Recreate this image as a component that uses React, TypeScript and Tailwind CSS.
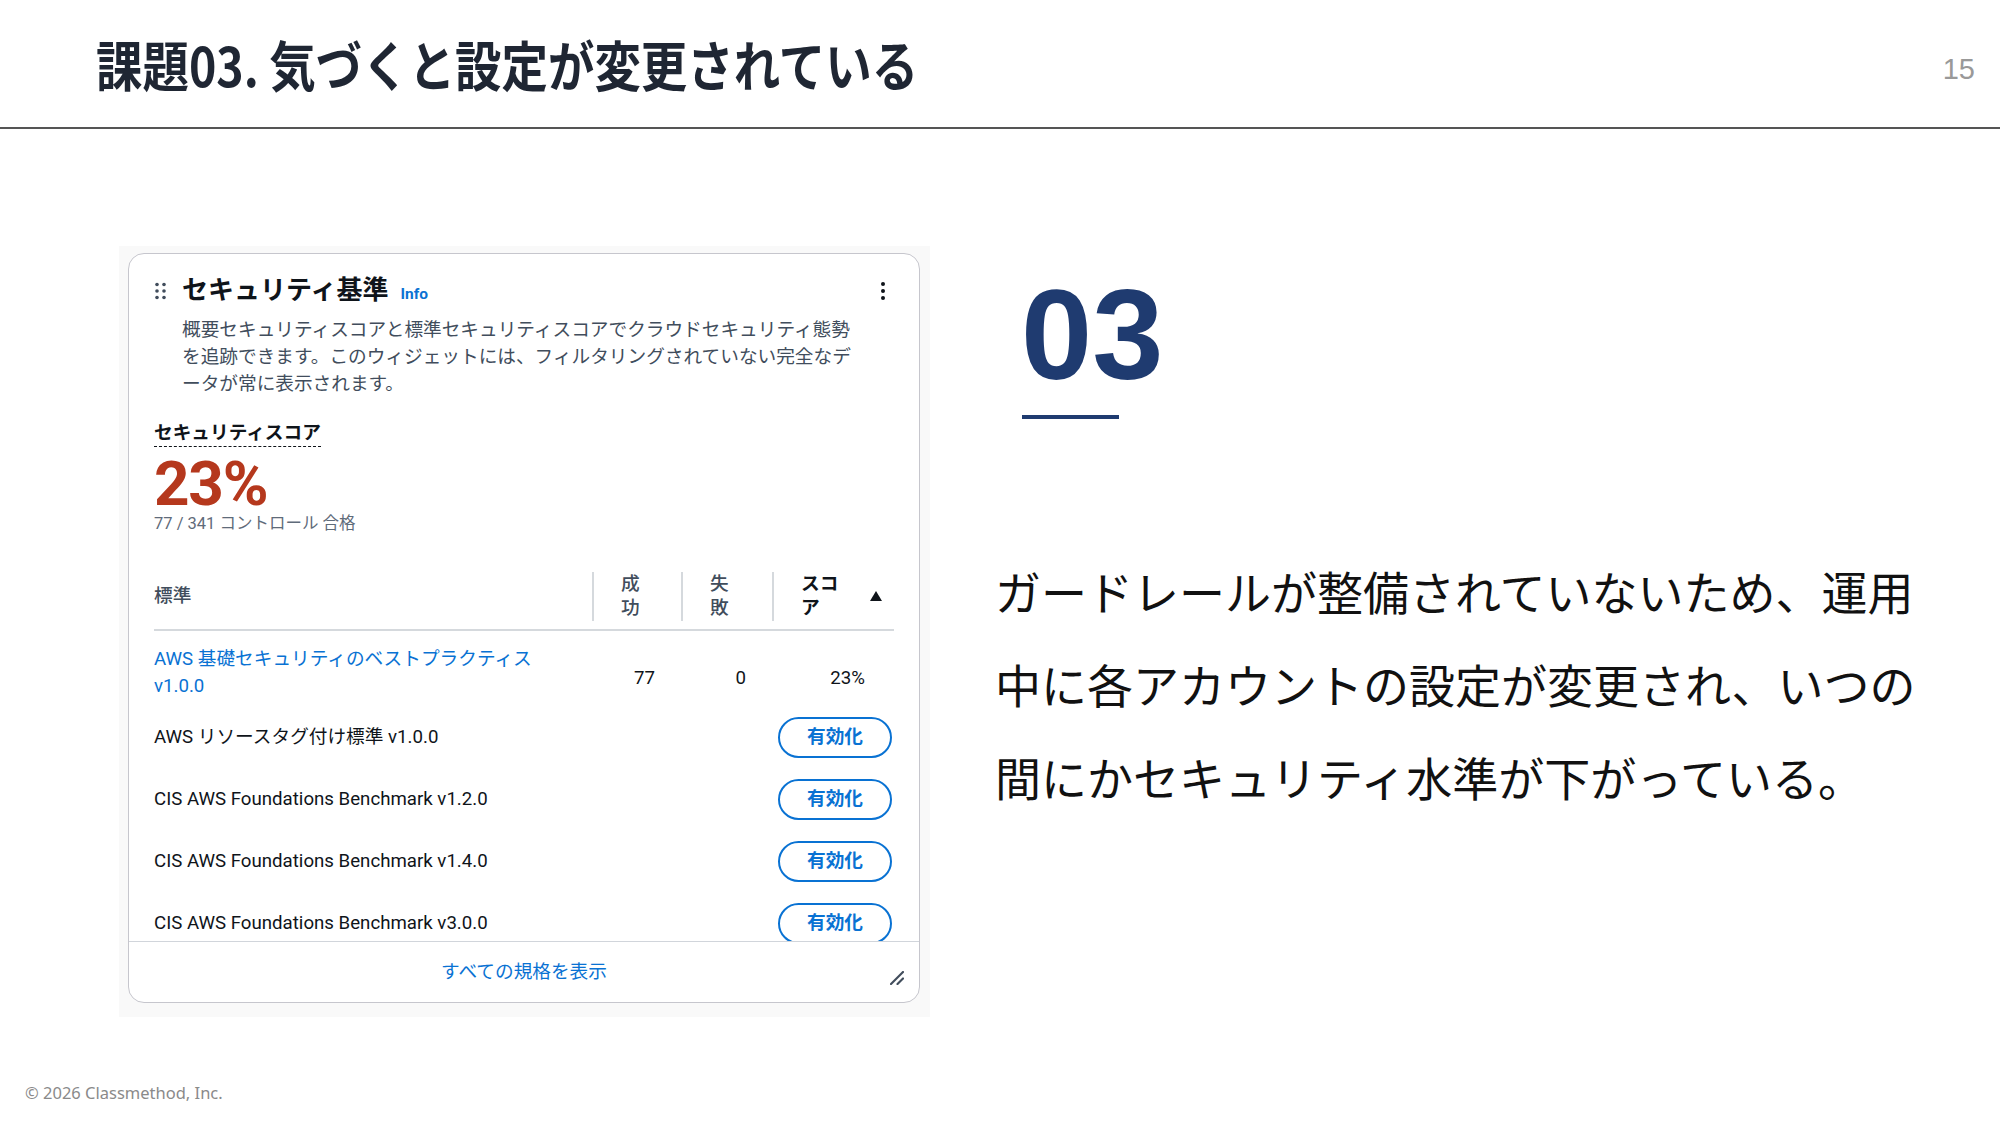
const SANS = "font-['Roboto','Noto_Sans_CJK_JP',sans-serif]"

function GripIcon() {
  return (
    <svg width="11" height="18" viewBox="0 0 11 18" className="ml-[1px] shrink-0">
      {[2.5, 9, 15.5].map((y) => (
        <g key={y} fill="#414d5c">
          <circle cx="2" cy={y} r="1.8" />
          <circle cx="9" cy={y} r="1.8" />
        </g>
      ))}
    </svg>
  )
}

function KebabIcon() {
  return (
    <svg width="6" height="20" viewBox="0 0 6 20" className="ml-auto mr-[8px] shrink-0">
      <circle cx="3" cy="3" r="2" fill="#0f141a" />
      <circle cx="3" cy="10" r="2" fill="#0f141a" />
      <circle cx="3" cy="17" r="2" fill="#0f141a" />
    </svg>
  )
}

function HeaderCell({ label, strong }: { label: React.ReactNode; strong?: boolean }) {
  return (
    <div className="flex h-full items-center">
      <div className="h-[49px] w-[2px] bg-[#d5d9dd]" />
      <div className={strong ? 'pl-[27px] leading-[24px] font-bold text-[#0f141a]' : 'pl-[27px] leading-[24px] font-medium text-[#414d5c]'}>
        {label}
      </div>
    </div>
  )
}

const standards = [
  'AWS リソースタグ付け標準 v1.0.0',
  'CIS AWS Foundations Benchmark v1.2.0',
  'CIS AWS Foundations Benchmark v1.4.0',
  'CIS AWS Foundations Benchmark v3.0.0',
]

function SecurityCard() {
  return (
    <div className={`relative flex h-[750px] w-[792px] flex-col overflow-hidden rounded-[16px] border border-[#c6c6cd] bg-white text-[18.67px] text-[#0f141a] ${SANS}`}>
      <div className="h-[687px] overflow-hidden px-[25px] pt-[22px]">
        {/* header */}
        <div className="flex h-[30px] items-center">
          <GripIcon />
          <div className="ml-[16px] flex items-baseline">
            <h2 className="text-[26px] font-bold leading-[30px]">セキュリティ基準</h2>
            <span className="ml-[12px] text-[15.5px] font-bold text-[#0972d3]">Info</span>
          </div>
          <KebabIcon />
        </div>
        <p className="mt-[11px] whitespace-nowrap pl-[28px] leading-[27px] text-[#414d5c]">
          概要セキュリティスコアと標準セキュリティスコアでクラウドセキュリティ態勢
          <br />
          を追跡できます。このウィジェットには、フィルタリングされていない完全なデ
          <br />
          ータが常に表示されます。
        </p>

        {/* score */}
        <div className="mt-[21px]">
          <span className="inline-block border-b border-dashed border-[#0f141a] pb-[1px] font-bold leading-[24px]">
            セキュリティスコア
          </span>
        </div>
        <div className="mt-[7px] text-[62px] font-bold leading-[60px] tracking-[-0.02em] text-[#b5381d]">23%</div>
        <div className="text-[16.5px] leading-[20px] text-[#5f6b7a]">77 / 341 コントロール 合格</div>

        {/* table */}
        <div className="mt-[29px] grid h-[68px] grid-cols-[438px_89px_91px_122px] items-center border-b-2 border-[#d5d9dd]">
          <div className="font-medium text-[#414d5c]">標準</div>
          <HeaderCell label={<>成<br />功</>} />
          <HeaderCell label={<>失<br />敗</>} />
          <div className="flex h-full items-center">
            <HeaderCell label={<>スコ<br />ア</>} strong />
            <svg width="12" height="10" viewBox="0 0 12 10" className="ml-auto mr-[12px]">
              <polygon points="6,0 12,10 0,10" fill="#0f141a" />
            </svg>
          </div>
        </div>

        <div className="grid h-[75px] grid-cols-[438px_89px_91px_122px]">
          <div className="pt-[15px] leading-[27px] text-[#0972d3]">
            AWS 基礎セキュリティのベストプラクティス
            <br />
            v1.0.0
          </div>
          <div className="pr-[26px] pt-[34px] text-right leading-[27px]">77</div>
          <div className="pr-[26px] pt-[34px] text-right leading-[27px]">0</div>
          <div className="pr-[29px] pt-[34px] text-right leading-[27px]">23%</div>
        </div>

        {standards.map((name) => (
          <div key={name} className="flex h-[62px] items-center justify-between">
            <span>{name}</span>
            <button className="mr-[2px] h-[41px] w-[114px] rounded-full border-2 border-[#0972d3] font-bold text-[#0972d3]">
              有効化
            </button>
          </div>
        ))}
      </div>

      <div className="flex h-[61px] items-center justify-center border-t border-[#d1d5db] text-[#0972d3]">
        すべての規格を表示
      </div>

      {/* resize handle */}
      <svg width="14" height="14" viewBox="0 0 14 14" className="absolute bottom-[17px] right-[15px]">
        <line x1="1" y1="13" x2="13" y2="1" stroke="#414d5c" strokeWidth="2.2" strokeLinecap="round" />
        <line x1="7.5" y1="13" x2="13" y2="7.5" stroke="#414d5c" strokeWidth="2.2" strokeLinecap="round" />
      </svg>
    </div>
  )
}

export default function App() {
  return (
    <div className="relative flex h-[1125px] w-[2000px] flex-col overflow-hidden bg-white">
      <header className="flex h-[129px] shrink-0 items-center justify-between border-b-2 border-[#555] pl-[96px] pr-[25px]">
        <h1 className="inline-block origin-left scale-x-[0.86] whitespace-nowrap font-['Noto_Sans_CJK_JP',sans-serif] text-[54px] font-bold leading-none text-[#1f2633]">
          課題03. 気づくと設定が変更されている
        </h1>
        <span className="mt-[12px] font-['Liberation_Sans',Arial,sans-serif] text-[29px] text-[#999]">15</span>
      </header>

      <main className="flex flex-1 items-start">
        <div className="ml-[119px] mt-[117px] bg-[#f9f9f9] pb-[14px] pl-[9px] pr-[10px] pt-[7px]">
          <SecurityCard />
        </div>

        <div className="ml-[65px] mt-[142px] flex flex-col">
          <div className="ml-[26px] font-['Liberation_Sans',Arial,sans-serif] text-[128px] font-bold leading-none text-[#1f3b70]">
            03
          </div>
          <div className="ml-[27px] mt-[16px] h-[4px] w-[97px] bg-[#1f3b70]" />
          <p className="mt-[125px] whitespace-nowrap font-['Noto_Sans_CJK_JP',sans-serif] text-[46px] leading-[93px] text-[#111]">
            ガードレールが整備されていないため、運用
            <br />
            中に各アカウントの設定が変更され、いつの
            <br />
            間にかセキュリティ水準が下がっている。
          </p>
        </div>
      </main>

      <footer className="pb-[21px] pl-[25px] font-['Noto_Sans',sans-serif] text-[16.5px] leading-[22px] text-[#8a8a8a]">
        © 2026 Classmethod, Inc.
      </footer>
    </div>
  )
}
